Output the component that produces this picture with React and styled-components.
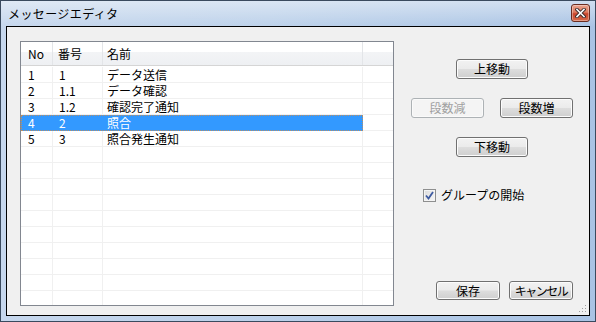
import React from 'react'
import styled, { createGlobalStyle, css } from 'styled-components'

const GlobalStyle = createGlobalStyle`
  html, body {
    margin: 0;
    padding: 0;
    background: #ffffff;
  }
  body {
    font-family: "Noto Sans CJK JP", "Noto Sans", sans-serif;
    font-size: 12px;
    color: #000000;
  }
  * {
    box-sizing: border-box;
  }
`

const Window = styled.div`
  width: 596px;
  height: 322px;
  border: 1px solid #3a4a5e;
  padding: 0 5px 5px;
  display: flex;
  flex-direction: column;
  background:
    linear-gradient(180deg, rgba(255,255,255,0.45) 0, rgba(255,255,255,0) 26px),
    linear-gradient(90deg, #c6d7ed 0%, #bcd1ea 45%, #a9c3e4 100%);
`

const TitleBar = styled.div`
  height: 25px;
  display: flex;
  align-items: center;
  padding-left: 2px;
`

const Title = styled.div`
  flex: 1;
  font-size: 12px;
  line-height: 14px;
  color: #000;
  letter-spacing: 0.4px;
`

const CloseButton = styled.div`
  width: 19px;
  height: 18px;
  margin-top: -2px;
  border: 1px solid #6a2c20;
  border-radius: 3px;
  background: linear-gradient(180deg, #eaa38f 0%, #de7a5e 45%, #c9442a 55%, #d86c4c 100%);
  box-shadow: inset 0 0 0 1px rgba(255,255,255,0.35);
  display: flex;
  align-items: center;
  justify-content: center;
`

const Client = styled.div`
  flex: 1;
  border: 1px solid #000000;
  background: #f0f0f0;
  display: flex;
  padding: 14px 0 9px 13px;
  position: relative;
`

const ListBox = styled.div`
  width: 374px;
  height: 265px;
  border: 1px solid #828790;
  background: #ffffff;
  overflow: hidden;
`

const Header = styled.div`
  display: flex;
  height: 24px;
  border-bottom: 1px solid #d5d5d5;
  background: linear-gradient(180deg, #ffffff 0%, #ffffff 42%, #f3f4f6 43%, #eef0f3 100%);
`

const HeaderCell = styled.div`
  width: ${p => p.$w}px;
  flex: ${p => (p.$fill ? 1 : 'none')};
  padding-left: ${p => p.$pad || 0}px;
  line-height: 23px;
  border-right: ${p => (p.$fill ? 'none' : '1px solid #e3e5e8')};
`

const Body = styled.div`
  padding-top: 1px;
`

const Row = styled.div`
  display: flex;
  height: 16px;
`

const RowMain = styled.div`
  display: flex;
  width: 342px;
  ${p => p.$selected && css`
    background: #3399ff;
    color: #ffffff;
    outline: 1px dotted rgba(230, 140, 50, 0.75);
    outline-offset: -1px;
  `}
`

const Cell = styled.div`
  width: ${p => p.$w}px;
  height: 16px;
  padding-left: ${p => p.$pad}px;
  line-height: 15px;
  white-space: nowrap;
  border-right: 1px solid ${p => (p.$selected ? '#3399ff' : '#f0f0f0')};
  border-bottom: 1px solid ${p => (p.$selected ? '#3399ff' : '#f0f0f0')};
`

const FillerCell = styled.div`
  flex: 1;
  height: 16px;
  border-bottom: 1px solid #f0f0f0;
`

const Panel = styled.div`
  width: 162px;
  margin-left: 17px;
  display: flex;
  flex-direction: column;
  padding: 18px 0 6px;
`

const Button = styled.button`
  width: ${p => p.$w}px;
  height: ${p => p.$h || 20}px;
  padding: 0;
  font-family: "Noto Sans CJK JP", "Noto Sans", sans-serif;
  font-size: 12px;
  line-height: 14px;
  letter-spacing: ${p => p.$spacing || 0}px;
  color: #000;
  border: 1px solid #707070;
  border-radius: 3px;
  background: linear-gradient(180deg, #f2f2f2 0%, #ebebeb 48%, #dddddd 52%, #cfcfcf 100%);
  box-shadow: inset 0 0 0 1px #fcfcfc;
  align-self: ${p => p.$align || 'auto'};

  &:disabled {
    color: #a0a0a0;
    border-color: #adb2b5;
    background: #f4f4f4;
    box-shadow: inset 0 0 0 1px #fafafa;
  }
`

const ButtonPair = styled.div`
  display: flex;
  justify-content: space-between;
  margin-top: 19px;
`

const CheckRow = styled.label`
  display: flex;
  align-items: center;
  gap: 5px;
  margin-top: 31px;
  padding-left: 12px;
  line-height: 14px;
`

const CheckBox = styled.span`
  width: 13px;
  height: 13px;
  border: 1px solid #8e8f8f;
  background: linear-gradient(135deg, #dcdcdc 0%, #f6f6f6 100%);
  box-shadow: inset 0 0 0 1px #f4f4f4;
  display: flex;
  align-items: center;
  justify-content: center;
`

const Footer = styled.div`
  margin-top: auto;
  display: flex;
  justify-content: flex-end;
  gap: 9px;
`

const Grip = styled.svg`
  position: absolute;
  right: 2px;
  bottom: 2px;
`

const rows = [
  { no: '1', num: '1', name: 'データ送信' },
  { no: '2', num: '1.1', name: 'データ確認' },
  { no: '3', num: '1.2', name: '確認完了通知' },
  { no: '4', num: '2', name: '照合', selected: true },
  { no: '5', num: '3', name: '照合発生通知' },
]

const emptyRows = Array.from({ length: 11 }, (_, i) => i)

const MessageEditor = () => (
  <Window>
    <TitleBar>
      <Title>メッセージエディタ</Title>
      <CloseButton>
        <svg width="11" height="10" viewBox="0 0 11 10">
          <path d="M2 1.5 L9 8.5 M9 1.5 L2 8.5" stroke="#3a2a2a" strokeWidth="3.4" strokeLinecap="square" />
          <path d="M2 1.5 L9 8.5 M9 1.5 L2 8.5" stroke="#ffffff" strokeWidth="1.6" strokeLinecap="square" />
        </svg>
      </CloseButton>
    </TitleBar>
    <Client>
      <ListBox>
        <Header>
          <HeaderCell $w={32} $pad={7}>No</HeaderCell>
          <HeaderCell $w={50} $pad={5}>番号</HeaderCell>
          <HeaderCell $w={260} $pad={4}>名前</HeaderCell>
          <HeaderCell $fill />
        </Header>
        <Body>
          {rows.map(r => (
            <Row key={r.no}>
              <RowMain $selected={r.selected}>
                <Cell $w={32} $pad={7} $selected={r.selected}>{r.no}</Cell>
                <Cell $w={50} $pad={6} $selected={r.selected}>{r.num}</Cell>
                <Cell $w={260} $pad={4} $selected={r.selected}>{r.name}</Cell>
              </RowMain>
              <FillerCell />
            </Row>
          ))}
          {emptyRows.map(i => (
            <Row key={'e' + i}>
              <RowMain>
                <Cell $w={32} $pad={7} />
                <Cell $w={50} $pad={6} />
                <Cell $w={260} $pad={4} />
              </RowMain>
              <FillerCell />
            </Row>
          ))}
        </Body>
      </ListBox>

      <Panel>
        <Button $w={72} $align="center">上移動</Button>
        <ButtonPair>
          <Button $w={73} disabled>段数減</Button>
          <Button $w={73}>段数増</Button>
        </ButtonPair>
        <Button $w={72} $align="center" style={{ marginTop: 19 }}>下移動</Button>
        <CheckRow>
          <CheckBox>
            <svg width="9" height="9" viewBox="0 0 9 9">
              <path d="M1 4.5 L3.5 7.5 L8 1" fill="none" stroke="#3d5aa0" strokeWidth="1.8" />
            </svg>
          </CheckBox>
          グループの開始
        </CheckRow>
        <Footer>
          <Button $w={64} $h={19}>保存</Button>
          <Button $w={64} $h={19} $spacing={-1.5}>キャンセル</Button>
        </Footer>
      </Panel>

      <Grip width="10" height="10" viewBox="0 0 10 10">
        {[[8, 2], [8, 5], [5, 5], [8, 8], [5, 8], [2, 8]].map(([x, y]) => (
          <rect key={x + '-' + y} x={x} y={y} width="1" height="1" fill="#a0a0a0" />
        ))}
      </Grip>
    </Client>
  </Window>
)

const App = () => (
  <>
    <GlobalStyle />
    <MessageEditor />
  </>
)

export default App
